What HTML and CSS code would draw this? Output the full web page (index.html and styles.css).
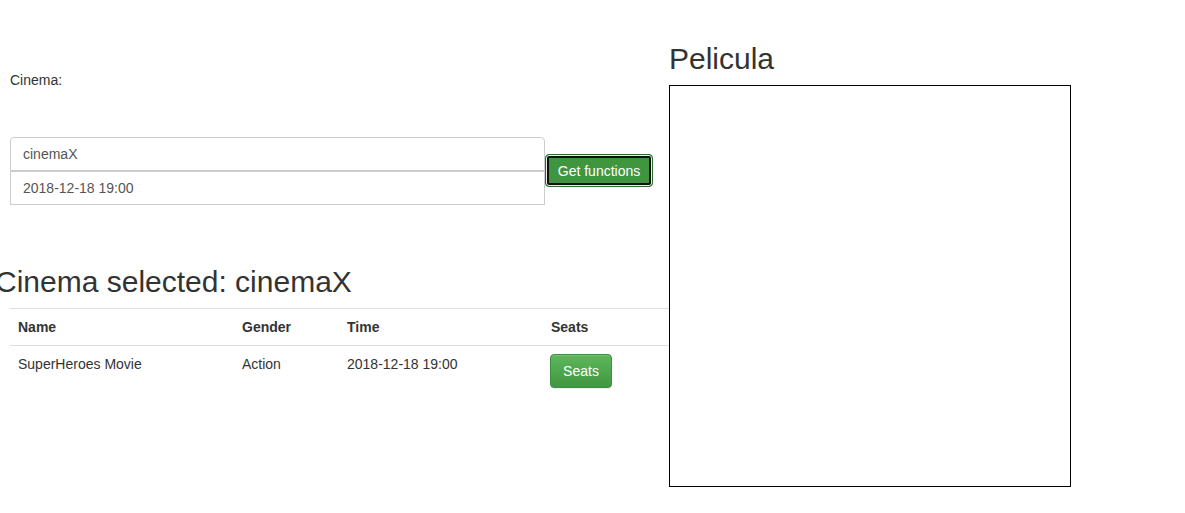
FILE: index.html
```html
<!DOCTYPE html>
<html>
<head>
<meta charset="utf-8">
<link rel="stylesheet" href="styles.css">
</head>
<body>
<div class="page">
  <div class="left">
    <label class="lbl">Cinema:</label>
    <div class="form-row">
      <div class="inputs">
        <div class="input first">cinemaX</div>
        <div class="input second">2018-12-18 19:00</div>
      </div>
      <button class="btn-get">Get functions</button>
    </div>
    <h2 class="sel">Cinema selected: cinemaX</h2>
    <table class="tbl">
      <thead>
        <tr><th class="c1">Name</th><th class="c2">Gender</th><th class="c3">Time</th><th class="c4">Seats</th></tr>
      </thead>
      <tbody>
        <tr><td>SuperHeroes Movie</td><td>Action</td><td>2018-12-18 19:00</td><td><button class="btn-seats">Seats</button></td></tr>
      </tbody>
    </table>
  </div>
  <div class="right">
    <h2 class="title">Pelicula</h2>
    <div class="canvas"></div>
  </div>
</div>
</body>
</html>
```
FILE: styles.css
```css
html, body {
  margin: 0;
  padding: 0;
  background: #fff;
}
body {
  font-family: "Liberation Sans", Arial, sans-serif;
  font-size: 14px;
  line-height: 20px;
  color: #333;
}
.page {
  display: flex;
  align-items: flex-start;
}
.left {
  width: 659px;
  padding-left: 10px;
  flex: none;
}
.lbl {
  display: block;
  margin-top: 70px;
  height: 20px;
  font-size: 14px;
}
.form-row {
  display: flex;
  align-items: center;
  margin-top: 47px;
}
.inputs {
  width: 535px;
}
.input {
  box-sizing: border-box;
  height: 34px;
  border: 1px solid #ccc;
  padding: 6px 12px;
  color: #555;
  font-size: 14px;
  line-height: 20px;
  background: #fff;
}
.input.first {
  border-radius: 4px 4px 0 0;
}
.input.second {
  border-radius: 0;
}
.btn-get {
  box-sizing: border-box;
  height: 33px;
  width: 108px;
  margin-top: -1px;
  padding: 0;
  font-family: "Liberation Sans", Arial, sans-serif;
  font-size: 14px;
  color: #fff;
  background: #3f963f;
  border: 1px solid #2b6e2b;
  border-radius: 4px;
  box-shadow: inset 0 0 0 1px #e8f0e8, inset 0 0 0 3px #111;
}
.sel {
  font-size: 30px;
  font-weight: 500;
  line-height: 33px;
  margin: 60px 0 10px -15px;
  white-space: nowrap;
}
.tbl {
  width: 659px;
  border-collapse: collapse;
  border-spacing: 0;
}
.tbl th, .tbl td {
  text-align: left;
  vertical-align: top;
  padding: 8px;
  line-height: 20px;
  border-top: 1px solid #ddd;
}
.tbl th {
  font-weight: bold;
  font-size: 14px;
}
.c1 { width: 208px; }
.c2 { width: 89px; }
.c3 { width: 188px; }
.btn-seats {
  box-sizing: border-box;
  height: 34px;
  width: 62px;
  padding: 0;
  margin-left: -1px;
  font-family: "Liberation Sans", Arial, sans-serif;
  font-size: 14px;
  color: #fff;
  border: 1px solid #3e8f3e;
  border-radius: 4px;
  background: linear-gradient(to bottom, #5cb85c 0%, #419641 100%);
  box-shadow: inset 0 1px 0 rgba(255,255,255,.15), 0 1px 1px rgba(0,0,0,.075);
}
.right {
  flex: none;
}
.title {
  font-size: 30px;
  font-weight: 500;
  line-height: 33px;
  margin: 42px 0 10px 0;
}
.canvas {
  width: 400px;
  height: 400px;
  border: 1px solid #000;
}
```
